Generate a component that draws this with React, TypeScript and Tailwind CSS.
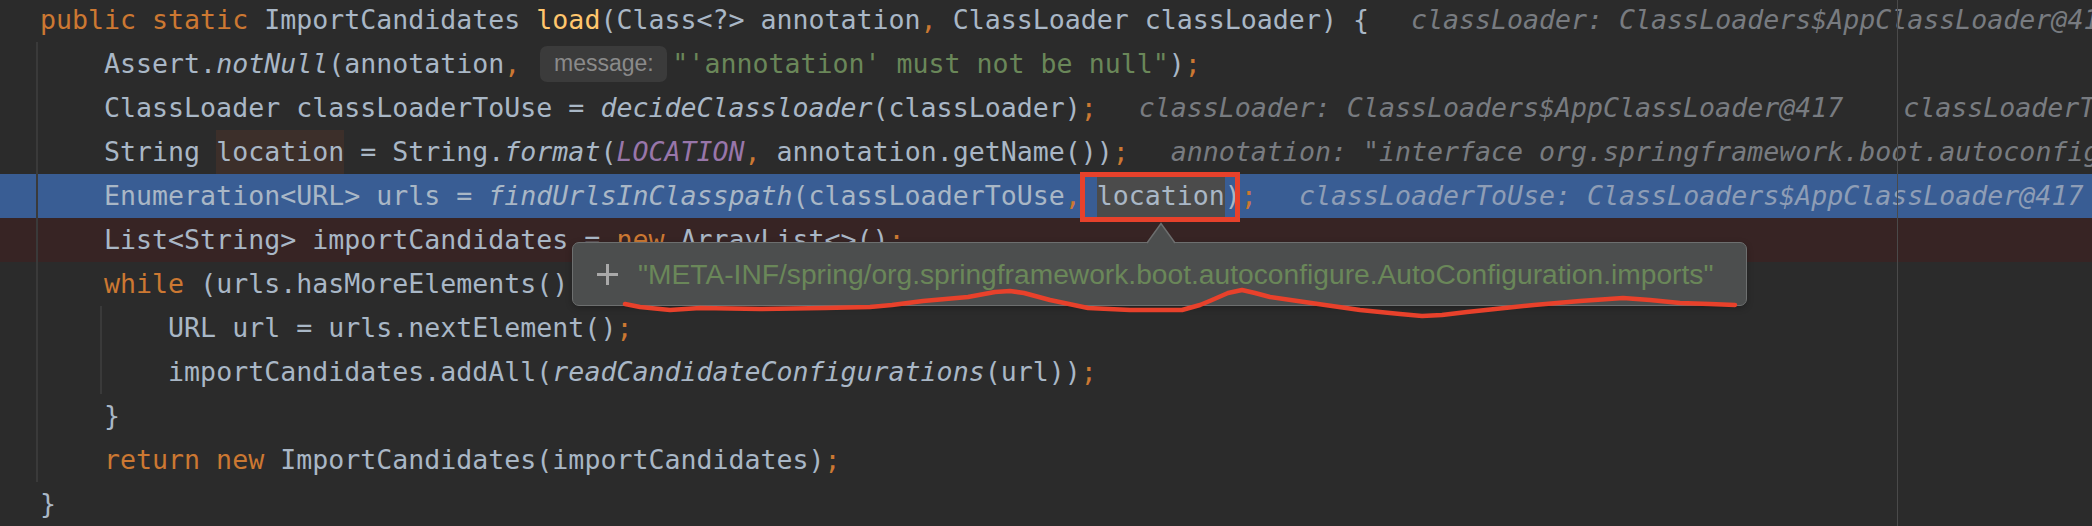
import React from 'react';

const K: React.FC<{ children: React.ReactNode }> = ({ children }) => (
  <span className="text-[#cc7832]">{children}</span>
);
const It: React.FC<{ children: React.ReactNode }> = ({ children }) => (
  <span className="italic">{children}</span>
);
const Str: React.FC<{ children: React.ReactNode }> = ({ children }) => (
  <span className="text-[#6a8759]">{children}</span>
);
const Hint: React.FC<{ children: React.ReactNode; gap?: string; onBlue?: boolean }> = ({ children, gap = 'ml-[42px]', onBlue }) => (
  <span className={`${gap} italic ${onBlue ? 'text-[#8e9db6]' : 'text-[#787b80]'}`}>{children}</span>
);

const Line: React.FC<{ children?: React.ReactNode; bg?: string }> = ({ children, bg = '' }) => (
  <div className={`h-[44px] leading-[44px] whitespace-pre pl-[40px] text-[#a9b7c6] ${bg}`}>{children}</div>
);

// hand drawn red underline under the tooltip value
const scribble = [
  [625, 304], [640, 307], [670, 310], [700, 308], [760, 309], [825, 308], [870, 307], [892, 305],
  [923, 301], [968, 297], [995, 292], [1010, 291], [1024, 293], [1050, 300], [1088, 308], [1130, 310],
  [1182, 310], [1200, 305], [1212, 300], [1228, 293], [1242, 290], [1255, 293], [1270, 297],
  [1325, 305], [1360, 310], [1400, 314], [1422, 316], [1442, 315], [1467, 312], [1534, 305],
  [1580, 301], [1623, 298], [1650, 300], [1680, 303], [1710, 304], [1735, 305],
];

export default function App() {
  return (
    <div className="relative w-[2092px] h-[526px] overflow-hidden bg-[#2b2b2b] [font-family:'DejaVu_Sans_Mono',monospace] text-[26.6px]">
      <div className="mt-[-2px]">
        <Line>
          <K>public static </K>ImportCandidates <span className="text-[#ffc66d]">load</span>(Class&lt;?&gt; annotation<K>, </K>ClassLoader classLoader) {'{'}
          <Hint>classLoader: ClassLoaders$AppClassLoader@417</Hint>
        </Line>
        <Line>
          {'    '}Assert.<It>notNull</It>(annotation<K>,</K>{' '}
          <span className="inline-flex align-middle items-center justify-center w-[127px] h-[36px] ml-[4px] mr-[5px] mb-[4px] rounded-[7px] bg-[#3b3b3b] text-[#8a8a8a] text-[23px] leading-none [font-family:'Liberation_Sans',Arial,sans-serif]">
            message:
          </span>
          <Str>"'annotation' must not be null"</Str>)<K>;</K>
        </Line>
        <Line>
          {'    '}ClassLoader classLoaderToUse = <It>decideClassloader</It>(classLoader)<K>;</K>
          <Hint>classLoader: ClassLoaders$AppClassLoader@417</Hint>
          <Hint gap="ml-[60px]">classLoaderToUse: ClassLoaders$AppClassLoader@417</Hint>
        </Line>
        <Line>
          {'    '}String <span className="inline-block h-[44px] bg-[#3c2f2a]">location</span> = String.<It>format</It>(
          <span className="italic text-[#9876aa]">LOCATION</span><K>, </K>annotation.getName())<K>;</K>
          <Hint>annotation: "interface org.springframework.boot.autoconfigure.AutoConfigurationPackage"</Hint>
        </Line>
        <Line bg="bg-[#395d94]">
          {'    '}Enumeration&lt;URL&gt; urls = <It>findUrlsInClasspath</It>(classLoaderToUse<K>, </K>
          <span className="inline-block h-[44px] bg-[#4b4b4b]">location</span>)<K>;</K>
          <Hint onBlue>classLoaderToUse: ClassLoaders$AppClassLoader@417</Hint>
        </Line>
        <Line bg="bg-[#372424]">
          {'    '}List&lt;String&gt; importCandidates = <K>new </K>ArrayList&lt;&gt;()<K>;</K>
        </Line>
        <Line>
          {'    '}<K>while </K>(urls.hasMoreElements()) {'{'}
        </Line>
        <Line>
          {'        '}URL url = urls.nextElement()<K>;</K>
        </Line>
        <Line>
          {'        '}importCandidates.addAll(<It>readCandidateConfigurations</It>(url))<K>;</K>
        </Line>
        <Line>{'    }'}</Line>
        <Line>
          {'    '}<K>return new </K>ImportCandidates(importCandidates)<K>;</K>
        </Line>
        <Line>{'}'}</Line>
      </div>

      {/* indent guides + right margin */}
      <div className="absolute left-[36px] top-[42px] w-[2px] h-[440px] bg-[#3a3a3a]" />
      <div className="absolute left-[100px] top-[306px] w-[2px] h-[88px] bg-[#3a3a3a]" />
      <div className="absolute left-[1897px] top-0 w-px h-full bg-[#4a4a4a]" />

      {/* red marker box */}
      <div className="absolute left-[1080px] top-[172px] w-[160px] h-[50px] border-[5px] border-[#e8412b]" />

      {/* value tooltip */}
      <div className="absolute left-[572px] top-[242px] w-[1175px] h-[64px] rounded-[7px] border-[1.5px] border-[#6d6f6f] bg-[#4c4e4e] flex items-center pl-[24px] shadow-[0_2px_6px_rgba(0,0,0,0.25)]">
        <svg width="21" height="21" viewBox="0 0 21 21">
          <rect x="9" y="0" width="3" height="21" fill="#a9a9a9" />
          <rect x="0" y="9" width="21" height="3" fill="#a9a9a9" />
        </svg>
        <span className="ml-[20px] text-[#6a8759] text-[28.2px] [font-family:'Liberation_Sans',Arial,sans-serif] whitespace-pre">
          "META-INF/spring/org.springframework.boot.autoconfigure.AutoConfiguration.imports"
        </span>
      </div>
      <svg className="absolute left-[1145px] top-[222px]" width="32" height="23" viewBox="0 0 32 23">
        <polygon points="2,22 16,1.5 30,22" fill="#4c4e4e" />
        <polyline points="2,21 16,1.5 30,21" fill="none" stroke="#6d6f6f" strokeWidth="1.5" />
      </svg>

      {/* freehand underline */}
      <svg className="absolute inset-0 pointer-events-none" width="2092" height="526">
        <polyline
          points={scribble.map(p => p.join(',')).join(' ')}
          fill="none"
          stroke="#e8412b"
          strokeWidth="4.5"
          strokeLinecap="round"
          strokeLinejoin="round"
        />
      </svg>
    </div>
  );
}
